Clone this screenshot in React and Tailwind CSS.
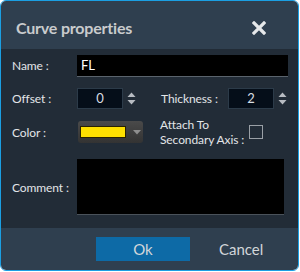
import React from 'react';

const Spinner = () => (
  <svg width="9" height="15" viewBox="0 0 9 15" className="ml-[4px]">
    <path d="M0.5 6 L4.5 1.5 L8.5 6 Z" fill="#b8bcc2" />
    <path d="M0.5 9 L4.5 13.5 L8.5 9 Z" fill="#b8bcc2" />
  </svg>
);

const NumberField = ({ value }) => (
  <div className="flex items-center">
    <div className="w-[46px] h-[21px] bg-[#050e19] border border-[#2c3b49] flex items-center justify-center text-[13px] text-[#d8dde3]">
      {value}
    </div>
    <Spinner />
  </div>
);

export default function App() {
  return (
    <div className="w-[300px] h-[272px] bg-white" style={{ fontFamily: 'Lato, "Noto Sans", sans-serif' }}>
      <div className="w-[299px] h-[271px] border-[1.5px] border-[#1b9fe3] rounded-[6px] overflow-hidden flex flex-col">
        <div className="h-[48px] bg-[#2f3f4f] flex items-center justify-between pl-[15px] pr-[32px] shrink-0">
          <span className="text-[16px] font-bold text-[#c9cbcd] mt-[5px] tracking-[-0.2px]">Curve properties</span>
          <svg width="14" height="14" viewBox="0 0 14 14" className="mt-[5px]">
            <path d="M2 2 L12 12 M12 2 L2 12" stroke="#e6e8ea" strokeWidth="3.2" strokeLinecap="square" />
          </svg>
        </div>
        <div className="flex-1 bg-[#222c37] pl-[11px] pt-[6px] text-[12px] tracking-[-0.1px] text-[#e2e5e8] whitespace-nowrap">
          <div className="flex items-center h-[22px]">
            <span className="w-[65px]">Name :</span>
            <div className="w-[211px] h-[22px] bg-black border-b border-[#5b646d] flex items-center pl-[4px] text-[13px] text-white">FL</div>
          </div>
          <div className="flex items-center h-[21px] mt-[11px]">
            <span className="w-[65px]">Offset :</span>
            <NumberField value="0" />
            <span className="ml-[25px] w-[67px]">Thickness :</span>
            <NumberField value="2" />
          </div>
          <div className="flex items-start mt-[12px] h-[30px]">
            <span className="w-[66px] mt-[3px]">Color :</span>
            <div className="w-[65px] h-[22px] rounded-[3px] bg-gradient-to-b from-[#4a4a4a] to-[#333333] flex items-center pl-[2px]">
              <div className="w-[46px] h-[12px] bg-[#ffe000] border border-[#2a2200]"></div>
              <svg width="8" height="5" viewBox="0 0 8 5" className="ml-[7px]">
                <path d="M0 0 L8 0 L4 4.5 Z" fill="#8e8e8e" />
              </svg>
            </div>
            <span className="ml-[17px] leading-[15px] mt-[-4px] w-[89px]">Attach To<br />Secondary Axis :</span>
            <div className="w-[14px] h-[14px] border border-[#9aa0a6] mt-[4px]"></div>
          </div>
          <div className="flex items-center mt-[8px]">
            <span className="w-[65px] mt-[2px]">Comment :</span>
            <div className="w-[207px] h-[56px] bg-black border-b border-[#4a525a]"></div>
          </div>
        </div>
        <div className="h-[42px] bg-[#2f3f4f] flex items-center shrink-0 pl-[95px]">
          <div className="w-[94px] h-[24px] bg-[#0d6aa6] flex items-center justify-center text-[15px] text-[#d2d6da]">Ok</div>
          <span className="ml-[29px] text-[15px] text-[#d2d6da]">Cancel</span>
        </div>
      </div>
    </div>
  );
}
